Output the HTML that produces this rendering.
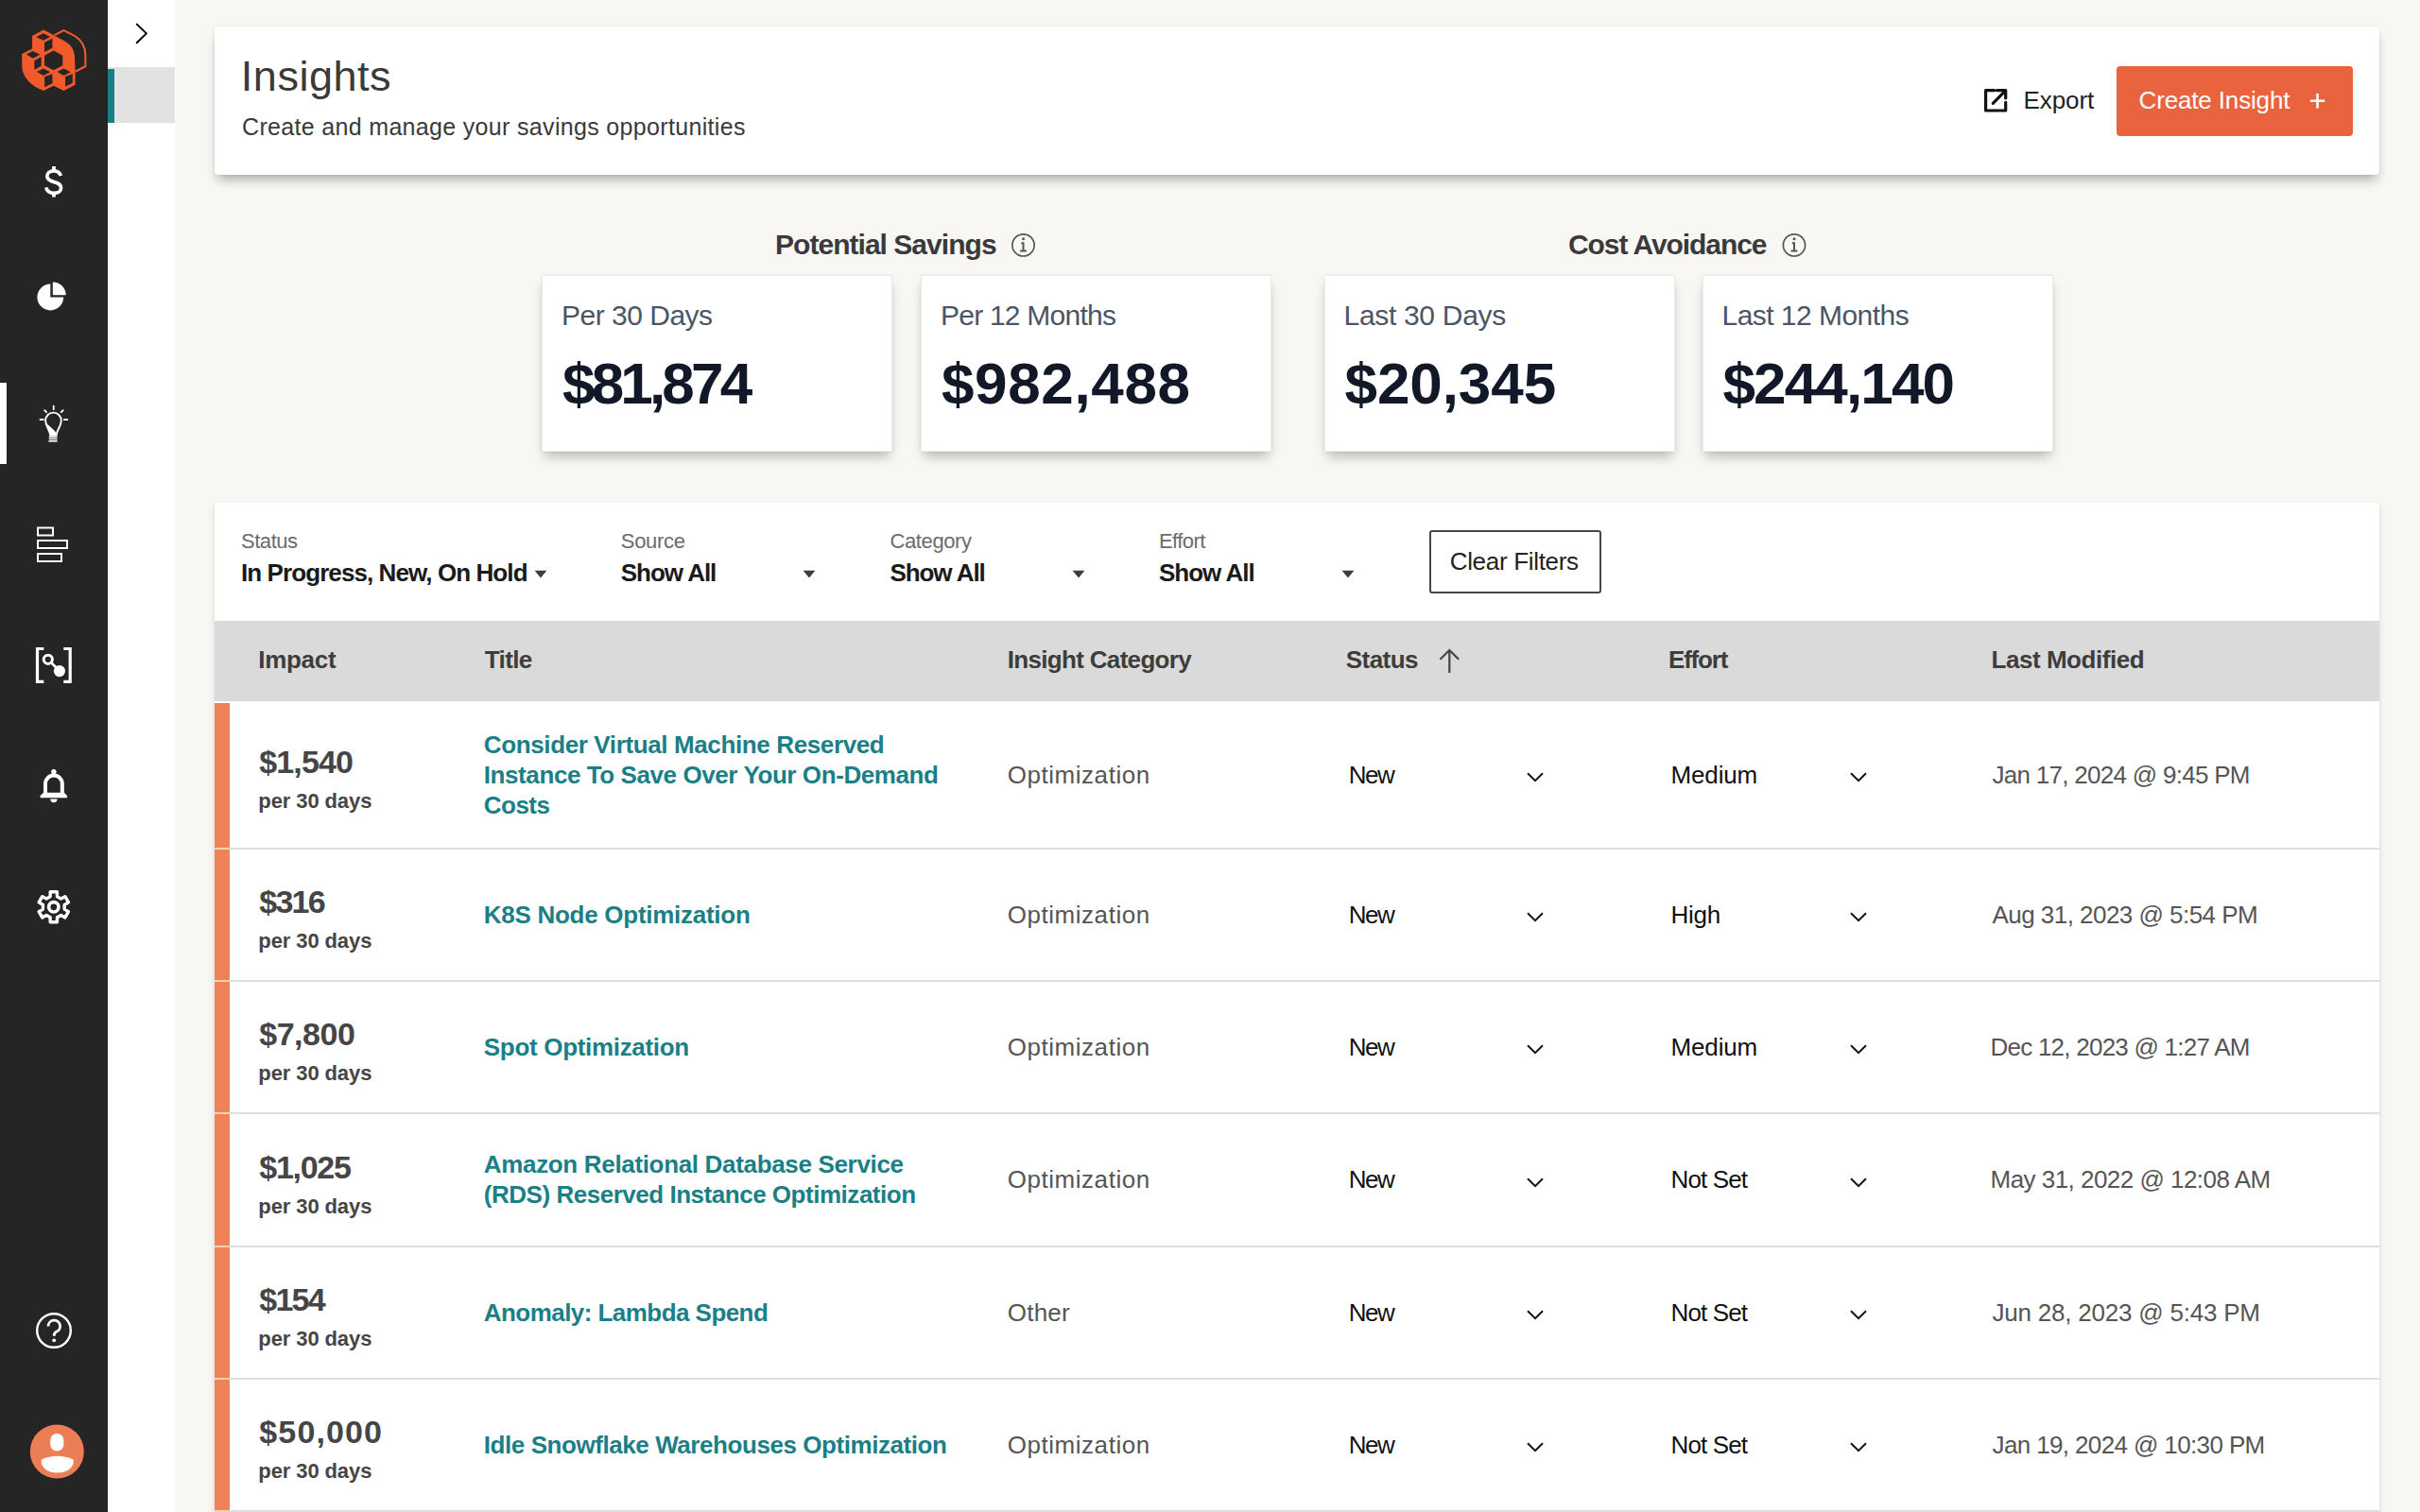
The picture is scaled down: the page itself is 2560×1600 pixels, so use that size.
<!DOCTYPE html>
<html><head><meta charset="utf-8"><title>Insights</title>
<style>
html,body{margin:0;padding:0;}
body{width:2560px;height:1600px;overflow:hidden;position:relative;background:#f8f7f4;font-family:"Liberation Sans",sans-serif;}
.t{position:absolute;white-space:nowrap;}
svg{overflow:visible;}
</style></head><body>
<div style="position:absolute;left:0px;top:0px;width:114px;height:1600px;background:#252525;"></div>
<div style="position:absolute;left:114px;top:0px;width:76px;height:1600px;background:linear-gradient(to right,#fff 0,#fff 70px,#f8f7f4 73px);"></div>
<div style="position:absolute;left:114px;top:71px;width:71px;height:59px;background:#e2e2e2;"></div>
<div style="position:absolute;left:114px;top:73px;width:7px;height:57px;background:#1b7f87;"></div>
<div style="position:absolute;left:0px;top:405px;width:7px;height:86px;background:#fff;"></div>
<svg style="position:absolute;left:130px;top:15px;" width="40" height="40" viewBox="0 15 40 40"><path d="M14.7 25.6 L24.9 35.4 L14.7 45.2" fill="none" stroke="#000" stroke-width="2" stroke-linecap="round" stroke-linejoin="round"/></svg>
<svg style="position:absolute;left:18px;top:26px;" width="80" height="76" viewBox="0 0 1592 1512">
<path fill="#f25a2c" d="M560 110 L775 222 L800 240 L985 340 C1120 410 1215 520 1215 700 L1225 990 L1225 1270 L985 1395 L770 1290 L560 1395 C300 1300 105 1100 105 880 L105 615 L320 505 L320 240 Z"/>
<path fill="none" stroke="#f25a2c" stroke-width="40" stroke-linejoin="round" d="M790 222 L985 120 L1210 235 Q1440 380 1440 640 L1440 880 L1225 990"/>
<g fill="#252525">
<path d="M405 262 L555 185 L700 258 L555 335 Z"/>
<path d="M578 378 L745 290 L745 490 L578 575 Z"/>
<path d="M195 625 L330 555 L485 630 L335 710 Z"/>
<path d="M365 760 L510 680 L510 870 L365 950 Z"/>
<path d="M770 545 L960 650 L960 860 L770 960 L578 860 L578 650 Z"/>
<path d="M415 995 L555 925 L700 1000 L555 1075 Z"/>
<path d="M580 1100 L745 1040 L745 1240 L580 1320 Z"/>
<path d="M845 995 L985 925 L1130 1000 L985 1075 Z"/>
<path d="M1015 1100 L1170 1040 L1170 1230 L1015 1310 Z"/>
</g>
</svg>
<svg style="position:absolute;left:0px;top:170px;" width="114" height="45" viewBox="0 170 114 45"><g fill="none" stroke="#fff" stroke-width="3.7" stroke-linecap="butt">
<path d="M64.2 186.2 C63.4 182.6 60.6 180.9 57 180.9 C52.6 180.9 49.8 183.2 49.8 186.6 C49.8 190.4 53.4 191.6 57.2 192.6 C61.6 193.7 64.6 195.2 64.6 198.9 C64.6 202.4 61.4 204.3 57 204.3 C52.8 204.3 49.6 202.3 48.8 198.4"/>
<path d="M57 176 L57 181.5 M57 203.5 L57 208.5" stroke-width="3.8"/>
</g></svg>
<svg style="position:absolute;left:0px;top:280px;" width="114" height="60" viewBox="0 280 114 60"><path fill="#fff" d="M53.3 314.5 L53.3 300.6 A13.9 13.9 0 1 0 67.2 314.5 Z"/>
<path fill="#fff" d="M55.8 312.3 L55.8 298.4 A13.9 13.9 0 0 1 69.7 312.3 Z"/></svg>
<svg style="position:absolute;left:30px;top:420px;" width="50" height="55" viewBox="0 0 1375 1512"><g stroke="#fff" fill="none" stroke-linecap="round">
<line x1="735" y1="265" x2="735" y2="365" stroke-width="50"/>
<line x1="470" y1="390" x2="525" y2="445" stroke-width="50"/>
<line x1="1010" y1="390" x2="955" y2="445" stroke-width="50"/>
<line x1="345" y1="660" x2="435" y2="660" stroke-width="50"/>
<line x1="1040" y1="660" x2="1135" y2="660" stroke-width="50"/>
</g>
<path fill="none" stroke="#fff" stroke-width="52" d="M640 1110 C620 960 500 850 500 700 A228 228 0 1 1 955 700 C955 850 830 960 815 1110 Z"/>
<path fill="#fff" d="M520 760 L770 990 L840 1110 L615 1110 C600 950 530 880 520 760 Z"/>
<g fill="#fff"><rect x="600" y="1135" width="240" height="45"/><rect x="600" y="1198" width="240" height="40"/><rect x="590" y="1258" width="250" height="50"/></g>
</svg>
<svg style="position:absolute;left:0px;top:550px;" width="114" height="50" viewBox="0 550 114 50"><g fill="none" stroke="#fff" stroke-width="2">
<rect x="40" y="558.5" width="16" height="8"/>
<rect x="40" y="572" width="31" height="8"/>
<rect x="40" y="586" width="25" height="8"/>
</g></svg>
<svg style="position:absolute;left:0px;top:675px;" width="114" height="60" viewBox="0 675 114 60"><g fill="none" stroke="#fff" stroke-width="3.2">
<path d="M46.3 686.5 L39.5 686.5 L39.5 721.4 L46.3 721.4"/>
<path d="M67.3 686.5 L74.2 686.5 L74.2 721.4 L67.3 721.4"/>
<circle cx="50.8" cy="697.8" r="4.6" stroke-width="3"/>
<line x1="54.2" y1="701.2" x2="60" y2="707" stroke-width="2.8"/>
</g>
<circle cx="62.9" cy="710.1" r="6.1" fill="#fff"/></svg>
<svg style="position:absolute;left:32px;top:805px;" width="50" height="55" viewBox="0 0 1375 1512"><circle cx="685" cy="320" r="75" fill="#fff"/>
<path fill="none" stroke="#fff" stroke-width="110" d="M440 960 L440 670 A245 245 0 0 1 930 670 L930 960"/>
<path fill="#fff" d="M385 925 L985 925 L1075 1020 L1075 1080 L290 1080 L290 1020 Z"/>
<path fill="#fff" d="M585 1115 L785 1115 A100 100 0 0 1 585 1115 Z"/></svg>
<svg style="position:absolute;left:0px;top:930px;" width="114" height="60" viewBox="0 930 114 60"><path fill="none" stroke="#fff" stroke-width="3.4" stroke-linejoin="round" d="M53.10 948.81 L53.22 943.79 L60.38 943.79 L60.50 948.81 L64.47 951.10 L68.87 948.70 L72.45 954.90 L68.17 957.51 L68.17 962.09 L72.45 964.70 L68.87 970.90 L64.47 968.50 L60.50 970.79 L60.38 975.81 L53.22 975.81 L53.10 970.79 L49.13 968.50 L44.73 970.90 L41.15 964.70 L45.43 962.09 L45.43 957.51 L41.15 954.90 L44.73 948.70 L49.13 951.10 Z"/><circle cx="56.8" cy="959.8" r="5.2" fill="none" stroke="#fff" stroke-width="3.6"/></svg>
<svg style="position:absolute;left:0px;top:1380px;" width="114" height="60" viewBox="0 1380 114 60"><circle cx="57" cy="1408" r="17.8" fill="none" stroke="#fff" stroke-width="2.4"/>
<path d="M51 1403.5 A6.3 6.3 0 1 1 59.6 1409.3 Q57.2 1410.6 57.2 1413.8" fill="none" stroke="#fff" stroke-width="2.8"/>
<circle cx="57.2" cy="1418.3" r="1.9" fill="#fff"/></svg>
<svg style="position:absolute;left:0px;top:1500px;" width="114" height="80" viewBox="0 1500 114 80"><circle cx="60.3" cy="1536" r="28.5" fill="#ec7e55"/>
<rect x="53.2" y="1517" width="14.2" height="18.5" rx="7.1" ry="7.1" fill="#fff"/>
<path fill="#fff" d="M43.8 1544.5 Q60.6 1537 77.6 1544.5 L77.6 1549 Q74 1558.4 60.6 1558.6 Q47.4 1558.4 43.8 1549 Z"/></svg>
<div style="position:absolute;left:190px;top:0px;width:2370px;height:1600px;background:#f8f7f4;"></div>
<div style="position:absolute;left:227px;top:28px;width:2290px;height:157px;background:#fff;border-radius:4px;box-shadow:0 8px 12px -3px rgba(0,0,0,0.30),0 0 3px rgba(0,0,0,0.08);"></div>
<div class="t" style="left:254.8px;top:58.10px;font-size:45px;line-height:45px;color:#3a3a3a;font-weight:400;letter-spacing:0.529px;">Insights</div>
<div class="t" style="left:256.0px;top:121.83px;font-size:25px;line-height:25px;color:#3a3a3a;font-weight:400;letter-spacing:0.326px;">Create and manage your savings opportunities</div>
<svg style="position:absolute;left:2090px;top:85px;" width="40" height="40" viewBox="2090 85 40 40"><g fill="none" stroke="#111" stroke-width="3.2" stroke-linecap="round" stroke-linejoin="round">
<path d="M2109.6 95.7 L2100.6 95.7 L2100.6 117 L2121.7 117 L2121.7 108.3"/>
<path d="M2112.5 95.7 L2121.7 95.7 L2121.7 104"/>
<path d="M2108.3 109.3 L2121 96.3"/>
</g></svg>
<div class="t" style="left:2140.6px;top:92.99px;font-size:26px;line-height:26px;color:#222;font-weight:400;letter-spacing:-0.120px;">Export</div>
<div style="position:absolute;left:2239px;top:70px;width:250px;height:73.5px;background:#e9633f;border-radius:4px;"></div>
<div class="t" style="left:2262.5px;top:92.99px;font-size:26px;line-height:26px;color:#fff;font-weight:400;letter-spacing:-0.146px;">Create Insight</div>
<svg style="position:absolute;left:2440px;top:95px;" width="24" height="24" viewBox="2440 95 24 24"><path d="M2451.5 99 L2451.5 114.5 M2443.8 106.8 L2459.2 106.8" stroke="#fff" stroke-width="2.6"/></svg>
<div class="t" style="left:820.0px;top:244.20px;font-size:30px;line-height:30px;color:#3a3a3a;font-weight:700;letter-spacing:-0.969px;">Potential Savings</div>
<svg style="position:absolute;left:1065px;top:242px;" width="36" height="36" viewBox="1065 242 36 36"><circle cx="1082.5" cy="259.4" r="11.6" fill="none" stroke="#555" stroke-width="1.7"/><circle cx="1082.5" cy="252.79999999999998" r="1.5" fill="#555"/><path d="M1080.3 257.2 L1082.5 257.2 L1082.5 265.59999999999997 M1079.1 265.59999999999997 L1085.9 265.59999999999997" fill="none" stroke="#555" stroke-width="2"/></svg>
<div class="t" style="left:1659.0px;top:244.20px;font-size:30px;line-height:30px;color:#3a3a3a;font-weight:700;letter-spacing:-1.077px;">Cost Avoidance</div>
<svg style="position:absolute;left:1880px;top:242px;" width="36" height="36" viewBox="1880 242 36 36"><circle cx="1898" cy="259.4" r="11.6" fill="none" stroke="#555" stroke-width="1.7"/><circle cx="1898" cy="252.79999999999998" r="1.5" fill="#555"/><path d="M1895.8 257.2 L1898 257.2 L1898 265.59999999999997 M1894.6 265.59999999999997 L1901.4 265.59999999999997" fill="none" stroke="#555" stroke-width="2"/></svg>
<div style="position:absolute;left:573px;top:291px;width:371px;height:187px;box-sizing:border-box;background:#fff;border:1px solid #ececec;box-shadow:0 8px 12px -3px rgba(0,0,0,0.26),0 0 3px rgba(0,0,0,0.06);"></div>
<div class="t" style="left:594.0px;top:318.60px;font-size:30px;line-height:30px;color:#4b5565;font-weight:400;letter-spacing:-0.500px;">Per 30 Days</div>
<div class="t" style="left:595.0px;top:375.10px;font-size:62px;line-height:62px;color:#111827;font-weight:700;letter-spacing:-3.833px;">$81,874</div>
<div style="position:absolute;left:974px;top:291px;width:371px;height:187px;box-sizing:border-box;background:#fff;border:1px solid #ececec;box-shadow:0 8px 12px -3px rgba(0,0,0,0.26),0 0 3px rgba(0,0,0,0.06);"></div>
<div class="t" style="left:995.0px;top:318.60px;font-size:30px;line-height:30px;color:#4b5565;font-weight:400;letter-spacing:-0.767px;">Per 12 Months</div>
<div class="t" style="left:996.0px;top:375.10px;font-size:62px;line-height:62px;color:#111827;font-weight:700;letter-spacing:0.643px;">$982,488</div>
<div style="position:absolute;left:1400.5px;top:291px;width:371px;height:187px;box-sizing:border-box;background:#fff;border:1px solid #ececec;box-shadow:0 8px 12px -3px rgba(0,0,0,0.26),0 0 3px rgba(0,0,0,0.06);"></div>
<div class="t" style="left:1421.5px;top:318.60px;font-size:30px;line-height:30px;color:#4b5565;font-weight:400;letter-spacing:-0.309px;">Last 30 Days</div>
<div class="t" style="left:1422.5px;top:375.10px;font-size:62px;line-height:62px;color:#111827;font-weight:700;letter-spacing:-0.083px;">$20,345</div>
<div style="position:absolute;left:1800.5px;top:291px;width:371px;height:187px;box-sizing:border-box;background:#fff;border:1px solid #ececec;box-shadow:0 8px 12px -3px rgba(0,0,0,0.26),0 0 3px rgba(0,0,0,0.06);"></div>
<div class="t" style="left:1821.5px;top:318.60px;font-size:30px;line-height:30px;color:#4b5565;font-weight:400;letter-spacing:-0.538px;">Last 12 Months</div>
<div class="t" style="left:1822.5px;top:375.10px;font-size:62px;line-height:62px;color:#111827;font-weight:700;letter-spacing:-1.857px;">$244,140</div>
<div style="position:absolute;left:227px;top:532px;width:2290px;height:1100px;background:#fff;box-shadow:0 3px 6px rgba(0,0,0,0.14);"></div>
<div class="t" style="left:255.0px;top:562.07px;font-size:22px;line-height:22px;color:#6b6b6b;font-weight:400;letter-spacing:-0.460px;">Status</div>
<div class="t" style="left:255.0px;top:592.99px;font-size:26px;line-height:26px;color:#1a1a1a;font-weight:700;letter-spacing:-0.917px;">In Progress, New, On Hold</div>
<svg style="position:absolute;left:564.3px;top:600px;" width="16" height="14" viewBox="564.3 600 16 14"><path d="M565.9 603.7 L578.6999999999999 603.7 L572.3 611.6 Z" fill="#3d3d3d"/></svg>
<div class="t" style="left:656.8px;top:562.07px;font-size:22px;line-height:22px;color:#6b6b6b;font-weight:400;letter-spacing:-0.300px;">Source</div>
<div class="t" style="left:656.8px;top:592.99px;font-size:26px;line-height:26px;color:#1a1a1a;font-weight:700;letter-spacing:-1.043px;">Show All</div>
<svg style="position:absolute;left:848.4px;top:600px;" width="16" height="14" viewBox="848.4 600 16 14"><path d="M850.0 603.7 L862.8 603.7 L856.4 611.6 Z" fill="#3d3d3d"/></svg>
<div class="t" style="left:941.4px;top:562.07px;font-size:22px;line-height:22px;color:#6b6b6b;font-weight:400;letter-spacing:-0.371px;">Category</div>
<div class="t" style="left:941.4px;top:592.99px;font-size:26px;line-height:26px;color:#1a1a1a;font-weight:700;letter-spacing:-1.057px;">Show All</div>
<svg style="position:absolute;left:1133.3px;top:600px;" width="16" height="14" viewBox="1133.3 600 16 14"><path d="M1134.8999999999999 603.7 L1147.7 603.7 L1141.3 611.6 Z" fill="#3d3d3d"/></svg>
<div class="t" style="left:1226.0px;top:562.07px;font-size:22px;line-height:22px;color:#6b6b6b;font-weight:400;letter-spacing:-0.580px;">Effort</div>
<div class="t" style="left:1226.0px;top:592.99px;font-size:26px;line-height:26px;color:#1a1a1a;font-weight:700;letter-spacing:-1.000px;">Show All</div>
<svg style="position:absolute;left:1418px;top:600px;" width="16" height="14" viewBox="1418 600 16 14"><path d="M1419.6 603.7 L1432.4 603.7 L1426 611.6 Z" fill="#3d3d3d"/></svg>
<div style="position:absolute;left:1511.7px;top:561.3px;width:182px;height:66.5px;box-sizing:border-box;border:2px solid #474747;border-radius:3px;background:#fff;"></div>
<div class="t" style="left:1533.7px;top:580.99px;font-size:26px;line-height:26px;color:#222;font-weight:400;letter-spacing:-0.308px;">Clear Filters</div>
<div style="position:absolute;left:227px;top:657px;width:2290px;height:85px;background:#dadada;"></div>
<div class="t" style="left:273.3px;top:685.39px;font-size:26px;line-height:26px;color:#3d3d3d;font-weight:700;letter-spacing:-0.300px;">Impact</div>
<div class="t" style="left:512.8px;top:685.39px;font-size:26px;line-height:26px;color:#3d3d3d;font-weight:700;letter-spacing:-0.625px;">Title</div>
<div class="t" style="left:1065.7px;top:685.39px;font-size:26px;line-height:26px;color:#3d3d3d;font-weight:700;letter-spacing:-0.673px;">Insight Category</div>
<div class="t" style="left:1423.8px;top:685.39px;font-size:26px;line-height:26px;color:#3d3d3d;font-weight:700;letter-spacing:-0.560px;">Status</div>
<div class="t" style="left:1765.0px;top:685.39px;font-size:26px;line-height:26px;color:#3d3d3d;font-weight:700;letter-spacing:-1.200px;">Effort</div>
<div class="t" style="left:2106.5px;top:685.39px;font-size:26px;line-height:26px;color:#3d3d3d;font-weight:700;letter-spacing:-0.458px;">Last Modified</div>
<svg style="position:absolute;left:1515px;top:680px;" width="36" height="40" viewBox="1515 680 36 40"><path d="M1533.3 688.5 L1533.3 712 M1523.4 697.8 L1533.3 688 L1543.2 697.8" fill="none" stroke="#444" stroke-width="2.2"/></svg>
<div style="position:absolute;left:227px;top:744px;width:16px;height:153px;background:#ef8257;"></div>
<div style="position:absolute;left:243px;top:897px;width:2274px;height:2px;background:#dedede;"></div>
<div style="position:absolute;left:227px;top:897px;width:16px;height:2px;background:#ffcfb4;"></div>
<div class="t" style="left:274.3px;top:789.21px;font-size:34px;line-height:34px;color:#454545;font-weight:700;letter-spacing:-0.880px;">$1,540</div>
<div class="t" style="left:273.3px;top:837.37px;font-size:22px;line-height:22px;color:#454545;font-weight:700;letter-spacing:-0.100px;">per 30 days</div>
<div class="t" style="left:511.8px;top:774.59px;font-size:26px;line-height:26px;color:#1b7f87;font-weight:700;letter-spacing:-0.375px;">Consider Virtual Machine Reserved</div>
<div class="t" style="left:511.8px;top:806.59px;font-size:26px;line-height:26px;color:#1b7f87;font-weight:700;letter-spacing:-0.414px;">Instance To Save Over Your On-Demand</div>
<div class="t" style="left:511.8px;top:838.59px;font-size:26px;line-height:26px;color:#1b7f87;font-weight:700;letter-spacing:-0.532px;">Costs</div>
<div class="t" style="left:1065.7px;top:806.99px;font-size:26px;line-height:26px;color:#555;font-weight:400;letter-spacing:0.545px;">Optimization</div>
<div class="t" style="left:1426.7px;top:806.99px;font-size:26px;line-height:26px;color:#111;font-weight:400;letter-spacing:-1.450px;">New</div>
<div class="t" style="left:1767.5px;top:806.99px;font-size:26px;line-height:26px;color:#111;font-weight:400;letter-spacing:-0.140px;">Medium</div>
<div class="t" style="left:2107.5px;top:806.99px;font-size:26px;line-height:26px;color:#555;font-weight:400;letter-spacing:-0.714px;">Jan 17, 2024 @ 9:45 PM</div>
<svg style="position:absolute;left:1613.8px;top:812.0px;" width="20" height="16" viewBox="1613.8 812.0 20 16"><path d="M1615.8 818.3 L1623.8 826.2 L1631.8 818.3" fill="none" stroke="#111" stroke-width="2"/></svg>
<svg style="position:absolute;left:1955.5px;top:812.0px;" width="20" height="16" viewBox="1955.5 812.0 20 16"><path d="M1957.5 818.3 L1965.5 826.2 L1973.5 818.3" fill="none" stroke="#111" stroke-width="2"/></svg>
<div style="position:absolute;left:227px;top:899px;width:16px;height:138px;background:#ef8257;"></div>
<div style="position:absolute;left:243px;top:1037px;width:2274px;height:2px;background:#dedede;"></div>
<div style="position:absolute;left:227px;top:1037px;width:16px;height:2px;background:#ffcfb4;"></div>
<div class="t" style="left:274.3px;top:937.21px;font-size:34px;line-height:34px;color:#454545;font-weight:700;letter-spacing:-1.767px;">$316</div>
<div class="t" style="left:273.3px;top:985.37px;font-size:22px;line-height:22px;color:#454545;font-weight:700;letter-spacing:-0.100px;">per 30 days</div>
<div class="t" style="left:511.8px;top:954.59px;font-size:26px;line-height:26px;color:#1b7f87;font-weight:700;letter-spacing:-0.275px;">K8S Node Optimization</div>
<div class="t" style="left:1065.7px;top:954.99px;font-size:26px;line-height:26px;color:#555;font-weight:400;letter-spacing:0.545px;">Optimization</div>
<div class="t" style="left:1426.7px;top:954.99px;font-size:26px;line-height:26px;color:#111;font-weight:400;letter-spacing:-1.450px;">New</div>
<div class="t" style="left:1767.5px;top:954.99px;font-size:26px;line-height:26px;color:#111;font-weight:400;letter-spacing:-0.267px;">High</div>
<div class="t" style="left:2107.5px;top:954.99px;font-size:26px;line-height:26px;color:#555;font-weight:400;letter-spacing:-0.533px;">Aug 31, 2023 @ 5:54 PM</div>
<svg style="position:absolute;left:1613.8px;top:960.0px;" width="20" height="16" viewBox="1613.8 960.0 20 16"><path d="M1615.8 966.3 L1623.8 974.2 L1631.8 966.3" fill="none" stroke="#111" stroke-width="2"/></svg>
<svg style="position:absolute;left:1955.5px;top:960.0px;" width="20" height="16" viewBox="1955.5 960.0 20 16"><path d="M1957.5 966.3 L1965.5 974.2 L1973.5 966.3" fill="none" stroke="#111" stroke-width="2"/></svg>
<div style="position:absolute;left:227px;top:1039px;width:16px;height:138px;background:#ef8257;"></div>
<div style="position:absolute;left:243px;top:1177px;width:2274px;height:2px;background:#dedede;"></div>
<div style="position:absolute;left:227px;top:1177px;width:16px;height:2px;background:#ffcfb4;"></div>
<div class="t" style="left:274.3px;top:1077.21px;font-size:34px;line-height:34px;color:#454545;font-weight:700;letter-spacing:-0.500px;">$7,800</div>
<div class="t" style="left:273.3px;top:1125.37px;font-size:22px;line-height:22px;color:#454545;font-weight:700;letter-spacing:-0.100px;">per 30 days</div>
<div class="t" style="left:511.8px;top:1094.59px;font-size:26px;line-height:26px;color:#1b7f87;font-weight:700;letter-spacing:-0.312px;">Spot Optimization</div>
<div class="t" style="left:1065.7px;top:1094.99px;font-size:26px;line-height:26px;color:#555;font-weight:400;letter-spacing:0.545px;">Optimization</div>
<div class="t" style="left:1426.7px;top:1094.99px;font-size:26px;line-height:26px;color:#111;font-weight:400;letter-spacing:-1.450px;">New</div>
<div class="t" style="left:1767.5px;top:1094.99px;font-size:26px;line-height:26px;color:#111;font-weight:400;letter-spacing:-0.140px;">Medium</div>
<div class="t" style="left:2105.5px;top:1094.99px;font-size:26px;line-height:26px;color:#555;font-weight:400;letter-spacing:-0.762px;">Dec 12, 2023 @ 1:27 AM</div>
<svg style="position:absolute;left:1613.8px;top:1100.0px;" width="20" height="16" viewBox="1613.8 1100.0 20 16"><path d="M1615.8 1106.3 L1623.8 1114.2 L1631.8 1106.3" fill="none" stroke="#111" stroke-width="2"/></svg>
<svg style="position:absolute;left:1955.5px;top:1100.0px;" width="20" height="16" viewBox="1955.5 1100.0 20 16"><path d="M1957.5 1106.3 L1965.5 1114.2 L1973.5 1106.3" fill="none" stroke="#111" stroke-width="2"/></svg>
<div style="position:absolute;left:227px;top:1179px;width:16px;height:139px;background:#ef8257;"></div>
<div style="position:absolute;left:243px;top:1318px;width:2274px;height:2px;background:#dedede;"></div>
<div style="position:absolute;left:227px;top:1318px;width:16px;height:2px;background:#ffcfb4;"></div>
<div class="t" style="left:274.3px;top:1217.71px;font-size:34px;line-height:34px;color:#454545;font-weight:700;letter-spacing:-1.300px;">$1,025</div>
<div class="t" style="left:273.3px;top:1265.87px;font-size:22px;line-height:22px;color:#454545;font-weight:700;letter-spacing:-0.100px;">per 30 days</div>
<div class="t" style="left:511.8px;top:1219.09px;font-size:26px;line-height:26px;color:#1b7f87;font-weight:700;letter-spacing:-0.333px;">Amazon Relational Database Service</div>
<div class="t" style="left:511.8px;top:1251.09px;font-size:26px;line-height:26px;color:#1b7f87;font-weight:700;letter-spacing:-0.474px;">(RDS) Reserved Instance Optimization</div>
<div class="t" style="left:1065.7px;top:1235.49px;font-size:26px;line-height:26px;color:#555;font-weight:400;letter-spacing:0.545px;">Optimization</div>
<div class="t" style="left:1426.7px;top:1235.49px;font-size:26px;line-height:26px;color:#111;font-weight:400;letter-spacing:-1.450px;">New</div>
<div class="t" style="left:1767.5px;top:1235.49px;font-size:26px;line-height:26px;color:#111;font-weight:400;letter-spacing:-0.867px;">Not Set</div>
<div class="t" style="left:2105.5px;top:1235.49px;font-size:26px;line-height:26px;color:#555;font-weight:400;letter-spacing:-0.527px;">May 31, 2022 @ 12:08 AM</div>
<svg style="position:absolute;left:1613.8px;top:1240.5px;" width="20" height="16" viewBox="1613.8 1240.5 20 16"><path d="M1615.8 1246.8 L1623.8 1254.7 L1631.8 1246.8" fill="none" stroke="#111" stroke-width="2"/></svg>
<svg style="position:absolute;left:1955.5px;top:1240.5px;" width="20" height="16" viewBox="1955.5 1240.5 20 16"><path d="M1957.5 1246.8 L1965.5 1254.7 L1973.5 1246.8" fill="none" stroke="#111" stroke-width="2"/></svg>
<div style="position:absolute;left:227px;top:1320px;width:16px;height:138px;background:#ef8257;"></div>
<div style="position:absolute;left:243px;top:1458px;width:2274px;height:2px;background:#dedede;"></div>
<div style="position:absolute;left:227px;top:1458px;width:16px;height:2px;background:#ffcfb4;"></div>
<div class="t" style="left:274.3px;top:1358.21px;font-size:34px;line-height:34px;color:#454545;font-weight:700;letter-spacing:-1.767px;">$154</div>
<div class="t" style="left:273.3px;top:1406.37px;font-size:22px;line-height:22px;color:#454545;font-weight:700;letter-spacing:-0.100px;">per 30 days</div>
<div class="t" style="left:511.8px;top:1375.59px;font-size:26px;line-height:26px;color:#1b7f87;font-weight:700;letter-spacing:-0.550px;">Anomaly: Lambda Spend</div>
<div class="t" style="left:1065.7px;top:1375.99px;font-size:26px;line-height:26px;color:#555;font-weight:400;letter-spacing:0.250px;">Other</div>
<div class="t" style="left:1426.7px;top:1375.99px;font-size:26px;line-height:26px;color:#111;font-weight:400;letter-spacing:-1.450px;">New</div>
<div class="t" style="left:1767.5px;top:1375.99px;font-size:26px;line-height:26px;color:#111;font-weight:400;letter-spacing:-0.867px;">Not Set</div>
<div class="t" style="left:2107.5px;top:1375.99px;font-size:26px;line-height:26px;color:#555;font-weight:400;letter-spacing:-0.214px;">Jun 28, 2023 @ 5:43 PM</div>
<svg style="position:absolute;left:1613.8px;top:1381.0px;" width="20" height="16" viewBox="1613.8 1381.0 20 16"><path d="M1615.8 1387.3 L1623.8 1395.2 L1631.8 1387.3" fill="none" stroke="#111" stroke-width="2"/></svg>
<svg style="position:absolute;left:1955.5px;top:1381.0px;" width="20" height="16" viewBox="1955.5 1381.0 20 16"><path d="M1957.5 1387.3 L1965.5 1395.2 L1973.5 1387.3" fill="none" stroke="#111" stroke-width="2"/></svg>
<div style="position:absolute;left:227px;top:1460px;width:16px;height:138px;background:#ef8257;"></div>
<div style="position:absolute;left:243px;top:1598px;width:2274px;height:2px;background:#dedede;"></div>
<div style="position:absolute;left:227px;top:1598px;width:16px;height:2px;background:#ffcfb4;"></div>
<div class="t" style="left:274.3px;top:1498.21px;font-size:34px;line-height:34px;color:#454545;font-weight:700;letter-spacing:1.133px;">$50,000</div>
<div class="t" style="left:273.3px;top:1546.37px;font-size:22px;line-height:22px;color:#454545;font-weight:700;letter-spacing:-0.100px;">per 30 days</div>
<div class="t" style="left:511.8px;top:1515.59px;font-size:26px;line-height:26px;color:#1b7f87;font-weight:700;letter-spacing:-0.432px;">Idle Snowflake Warehouses Optimization</div>
<div class="t" style="left:1065.7px;top:1515.99px;font-size:26px;line-height:26px;color:#555;font-weight:400;letter-spacing:0.545px;">Optimization</div>
<div class="t" style="left:1426.7px;top:1515.99px;font-size:26px;line-height:26px;color:#111;font-weight:400;letter-spacing:-1.450px;">New</div>
<div class="t" style="left:1767.5px;top:1515.99px;font-size:26px;line-height:26px;color:#111;font-weight:400;letter-spacing:-0.867px;">Not Set</div>
<div class="t" style="left:2107.5px;top:1515.99px;font-size:26px;line-height:26px;color:#555;font-weight:400;letter-spacing:-0.623px;">Jan 19, 2024 @ 10:30 PM</div>
<svg style="position:absolute;left:1613.8px;top:1521.0px;" width="20" height="16" viewBox="1613.8 1521.0 20 16"><path d="M1615.8 1527.3 L1623.8 1535.2 L1631.8 1527.3" fill="none" stroke="#111" stroke-width="2"/></svg>
<svg style="position:absolute;left:1955.5px;top:1521.0px;" width="20" height="16" viewBox="1955.5 1521.0 20 16"><path d="M1957.5 1527.3 L1965.5 1535.2 L1973.5 1527.3" fill="none" stroke="#111" stroke-width="2"/></svg>
</body></html>
